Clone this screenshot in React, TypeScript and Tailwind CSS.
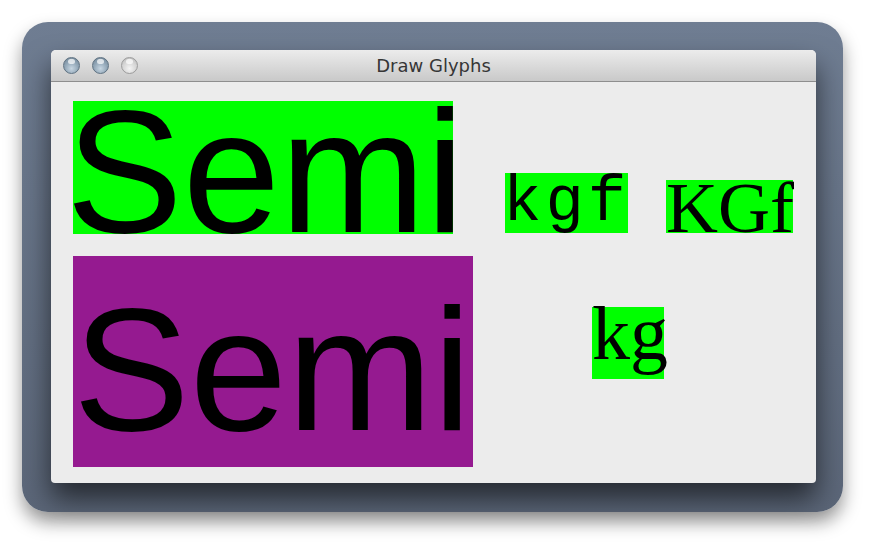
export default function App() {
  return (
    <div className="w-[884px] h-[558px] bg-white pt-[22px] pl-[22px]">
      {/* outer frame */}
      <div className="w-[821px] h-[490px] rounded-[26px] bg-gradient-to-b from-[#6f7d92] to-[#5b6678] pt-[28px] pl-[29px] shadow-[0_10px_18px_rgba(0,0,0,0.4)]">
        {/* window */}
        <div className="w-[765px] h-[433px] rounded-t-[5px] rounded-b-[4px] bg-[#ececec] overflow-hidden shadow-[0_16px_28px_rgba(0,0,0,0.6)]">
          <TitleBar />
          <Canvas />
        </div>
      </div>
    </div>
  );
}

function TitleBar() {
  return (
    <div className="relative h-[32px] bg-gradient-to-b from-[#ececec] to-[#c9c9c9] border-b border-[#8e8e8e] flex items-center justify-center">
      <div className="absolute left-[12px] top-[7px] flex gap-[12px]">
        <Light tone="blue" />
        <Light tone="blue" />
        <Light tone="gray" />
      </div>
      <span className="text-[18px] text-[#363636] font-['DejaVu_Sans',sans-serif] leading-none pt-[1px]">
        Draw Glyphs
      </span>
    </div>
  );
}

function Light({ tone }: { tone: 'blue' | 'gray' }) {
  const cls =
    tone === 'blue'
      ? 'border-[#5f7282] bg-[radial-gradient(circle_at_50%_70%,#c7d6e2_0%,#8ea3b4_55%,#6d8192_100%)]'
      : 'border-[#9c9c9c] bg-[radial-gradient(circle_at_50%_70%,#f4f4f4_0%,#d4d4d4_55%,#b5b5b5_100%)]';
  return (
    <div className={`relative w-[17px] h-[17px] rounded-full border ${cls}`}>
      <div className="absolute left-[4px] top-[1px] w-[7px] h-[5px] rounded-full bg-white/70" />
    </div>
  );
}

function Canvas() {
  return (
    <div className="flex pt-[19px] pl-[22px]">
      <div className="flex flex-col w-[400px]">
        {/* Semi on green ink bounds */}
        <div className="w-[380px] h-[133px] bg-[#00ff00]">
          <div className="-ml-[7px] -mt-[17px] text-[175px] leading-none font-['Liberation_Sans',Arial,sans-serif] text-black whitespace-nowrap">
            Semi
          </div>
        </div>
        {/* Semi on purple typographic bounds */}
        <div className="mt-[22px] w-[400px] h-[211px] bg-[#951a90]">
          <div className="mt-[26px] text-[175px] leading-none font-['Liberation_Sans',Arial,sans-serif] text-black whitespace-nowrap">
            Semi
          </div>
        </div>
      </div>

      <div className="flex flex-col">
        <div className="flex items-start">
          <div className="ml-[32px] mt-[72px] w-[123px] h-[60px] bg-[#00ff00]">
            <div className="-mt-[2px] -ml-[2px] text-[64px] tracking-[4px] leading-none font-['Courier_New','Liberation_Mono',monospace] text-black whitespace-nowrap">
              kgf
            </div>
          </div>
          <div className="ml-[38px] mt-[79px] w-[127px] h-[53px] bg-[#00ff00]">
            <div className="-mt-[8px] text-[72px] leading-none font-['Liberation_Serif','Times_New_Roman',serif] text-black whitespace-nowrap">
              KGf
            </div>
          </div>
        </div>
        <div className="ml-[119px] mt-[74px] w-[72px] h-[72px] bg-[#00ff00]">
          <div className="-mt-[12px] text-[76px] leading-none font-['Liberation_Serif','Times_New_Roman',serif] text-black whitespace-nowrap">
            kg
          </div>
        </div>
      </div>
    </div>
  );
}
